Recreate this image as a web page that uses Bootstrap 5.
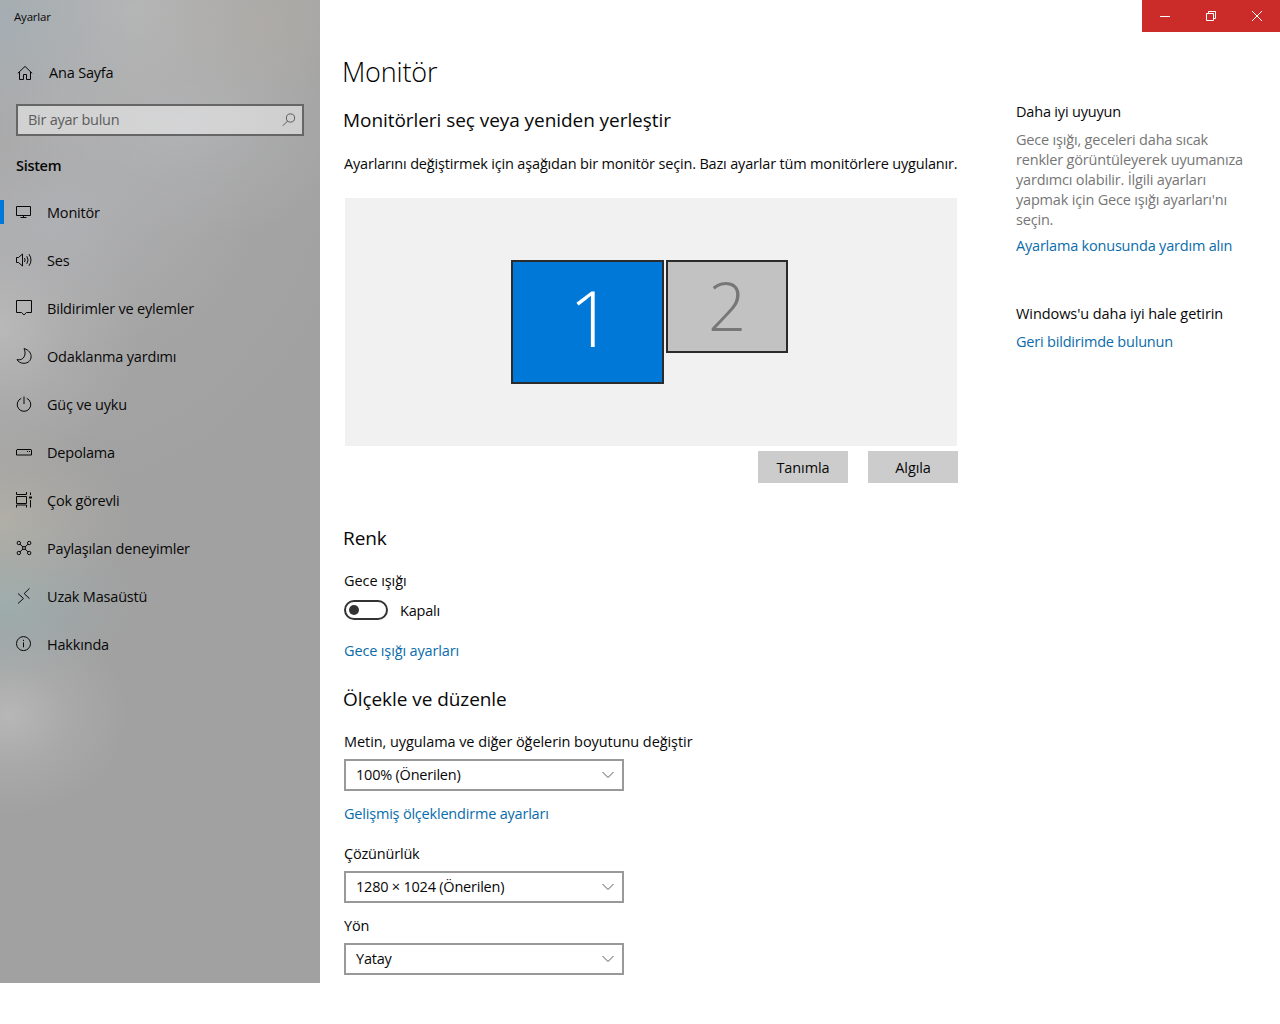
<!DOCTYPE html>
<html lang="tr">
<head>
<meta charset="utf-8">
<meta name="viewport" content="width=device-width, initial-scale=1">
<title>Ayarlar</title>
<link href="https://cdn.jsdelivr.net/npm/bootstrap@5.3.0/dist/css/bootstrap.min.css" rel="stylesheet">
<style>
  body { font-family: "Open Sans", "Noto Sans", sans-serif; font-size: 14.5px; line-height: 20px; letter-spacing: -.19px; color: #080808; background: #fff; height: 1024px; overflow: hidden; white-space: nowrap; }
  .side-pane { width: 320px; height: 983px; color: #080808;
    background:
      radial-gradient(150px 120px at 0 20px, rgba(163,174,181,.75), rgba(163,174,181,.3) 50%, rgba(163,174,181,0)),
      radial-gradient(120px 90px at 275px 25px, rgba(176,172,164,.6), rgba(176,172,164,.2) 50%, rgba(176,172,164,0)),
      radial-gradient(230px 160px at 130px 10px, rgba(184,184,184,.85), rgba(184,184,184,.35) 50%, rgba(184,184,184,0)),
      radial-gradient(180px 110px at 185px 130px, rgba(180,181,184,.7), rgba(180,181,184,.3) 50%, rgba(180,181,184,0)),
      radial-gradient(190px 130px at 60px 220px, rgba(177,178,182,.8), rgba(177,178,182,.3) 50%, rgba(177,178,182,0)),
      radial-gradient(140px 150px at 0 325px, rgba(186,186,186,.95), rgba(186,186,186,.35) 50%, rgba(186,186,186,0)),
      radial-gradient(130px 95px at 0 520px, rgba(178,176,168,.9), rgba(178,176,168,.4) 50%, rgba(178,176,168,0)),
      radial-gradient(130px 90px at 0 600px, rgba(156,174,175,.9), rgba(156,174,175,.4) 50%, rgba(156,174,175,0)),
      radial-gradient(120px 100px at 8px 715px, rgba(184,184,184,.95), rgba(184,184,184,.35) 50%, rgba(184,184,184,0)),
      radial-gradient(320px 420px at 60px 80px, rgba(176,176,176,.6), rgba(176,176,176,0)),
      #a1a1a1; }
  .pane-title { height: 32px; padding: 2px 0 0 14px; font-size: 11.5px; }
  .home-row { height: 48px; margin-top: 16px; padding: 2px 0 0 17px; }
  .search-box { height: 32px; margin: 8px 16px 0; padding: 0 6px 0 10px; border: 2px solid #666; background: rgba(255,255,255,.45); color: #5c5c5c; letter-spacing: -.26px; }
  .group-name { height: 52px; padding: 20px 0 0 16px; font-weight: 600; letter-spacing: -.3px; }
  .side-link { height: 48px; padding: 2px 0 0 16px; color: inherit; text-decoration: none; position: relative; }
  .side-link svg { width: 16px; height: 16px; margin: -2px 15px 0 0; flex: none; }
  .side-link.current::before { content: ""; position: absolute; left: 0; top: 12px; width: 4px; height: 24px; background: #0078d7; }
  svg { display: block; overflow: visible; fill: none; stroke: currentColor; }
  .main-col { width: 614px; margin-left: 24px; padding-top: 54px; }
  .page-name { font-size: 27px; font-weight: 300; line-height: 36px; margin: 0 0 16px -2px; color: #000; }
  .sec-name { font-size: 19px; font-weight: 400; line-height: 28px; margin: 0 0 19px -1px; letter-spacing: -.06px; }
  .intro { margin-top: 20px; letter-spacing: -.17px; }
  .screens { height: 248px; margin: 24px 1px 5px; background: #f1f1f1; padding: 62px 0 0 166px; }
  .screen { border: 2px solid #2b2b2b; font-weight: 300; line-height: 1; letter-spacing: 0; }
  .screen-a { width: 153px; height: 124px; background: #0078d7; color: #fff; font-size: 77px; margin-right: 2px; padding: 0 0 9px 7px; }
  .screen-b { width: 122px; height: 93px; background: #c2c2c2; color: #777; font-size: 67px; padding-bottom: 2px; }
  .screen-actions { gap: 20px; margin-bottom: 41px; }
  .flat-btn { width: 90px; height: 32px; background: #ccc; border: 0; border-radius: 0; color: #080808; font-size: 14.5px; padding: 1px 0 0; line-height: 31px; letter-spacing: -.1px; }
  .switch-row { margin: 9px 0 21px; height: 20px; }
  .switch-row span { padding-top: 2px; }
  .pill { width: 44px; height: 20px; border: 2px solid #333; border-radius: 10px; padding: 3px; margin-right: 12px; }
  .pill i { display: block; width: 10px; height: 10px; border-radius: 50%; background: #333; }
  .win-link { color: #0a6cab; text-decoration: none; display: block; height: 20px; letter-spacing: -.2px; }
  .after-night { margin-bottom: 24px; letter-spacing: -.14px; }
  .pick { width: 280px; height: 32px; border: 2px solid #999; padding: 0 8px 0 10px; margin: 7px 0 13px; letter-spacing: -.22px; }
  .pick svg { color: #555; }
  .gap-below { margin-bottom: 20px; }
  .roomy { letter-spacing: -.07px; }
  .help-col { width: 240px; margin-left: 58px; padding-top: 102px; }
  .hint { color: #767676; margin: 8px 0 6px; letter-spacing: -.19px; }
  .help-next { margin: 48px 0 8px; }
  .caption-bar { position: absolute; top: 0; right: 0; width: 138px; height: 32px; background: #cc2c29; color: #fff; }
  .caption-bar span { width: 46px; height: 32px; }
</style>
</head>
<body>
<div class="d-flex align-items-start">
  <aside class="side-pane flex-shrink-0">
    <div class="pane-title d-flex align-items-center">Ayarlar</div>
    <div class="home-row d-flex align-items-center">
      <svg width="16" height="16" viewBox="0 0 16 16"><path d="M.8 8.300 8 1.400l7.200 6.900M2.500 7v7.500h4v-5h3v5h4V7"/></svg>
      <span class="ms-3">Ana Sayfa</span>
    </div>
    <div class="search-box d-flex align-items-center justify-content-between">
      <span>Bir ayar bulun</span>
      <svg width="14" height="14" viewBox="0 0 14 14"><circle cx="8.500" cy="5" r="4.100"/><path d="M5.600 8 .8 12.800"/></svg>
    </div>
    <div class="group-name">Sistem</div>
    <nav>
      <a class="side-link current d-flex align-items-center" href="#"><svg viewBox="0 0 16 16"><path d="M.5 2.500h14v9H.5zM7.500 11.500v2M4.500 13.500h6"/></svg>Monitör</a>
      <a class="side-link d-flex align-items-center" href="#"><svg viewBox="0 0 16 16"><path d="M.5 5.500h2l4-3.500v12l-4-3.500h-2zM8.500 6q1.300 2 0 4M10.800 4.200q2.600 3.800 0 7.600M13 2.200q4 5.800 0 11.600"/></svg>Ses</a>
      <a class="side-link d-flex align-items-center" href="#"><svg viewBox="0 0 16 16"><path d="M.5.500h15v12h-5l-2.500 2.400-2.500-2.400h-5z"/></svg>Bildirimler ve eylemler</a>
      <a class="side-link d-flex align-items-center" href="#"><svg viewBox="0 0 16 16"><path d="M8 .6c10 2.500 9 14.500 0 14.700-3.500 0-5.800-1.500-7-3.700C7.500 13.300 11 6.300 8 .6z"/></svg>Odaklanma yardımı</a>
      <a class="side-link d-flex align-items-center" href="#"><svg viewBox="0 0 16 16"><path d="M5.300 2.300a6.800 6.800 0 1 0 5.400 0M8 .5v7.500"/></svg>Güç ve uyku</a>
      <a class="side-link d-flex align-items-center" href="#"><svg viewBox="0 0 16 16"><path d="M1 5.500h14l.5.500v5h-15V6zM11 7.500h1M13 7.500h1"/></svg>Depolama</a>
      <a class="side-link d-flex align-items-center" href="#"><svg viewBox="0 0 16 16"><path d="M.5 0v2.500h10V0M.5 15.500v-2.500h10v2.500M.5 4.500h10v7H.5zM14.500.500v2.500M14.500 8v7.500"/><path d="M13 4.500h3v2h-3z" fill="currentColor" stroke="none"/></svg>Çok görevli</a>
      <a class="side-link d-flex align-items-center" href="#"><svg viewBox="0 0 16 16"><circle cx="2.800" cy="3" r="1.700"/><circle cx="13.200" cy="3" r="1.700"/><circle cx="2.800" cy="13" r="1.700"/><circle cx="13.200" cy="13" r="1.700"/><circle cx="8" cy="8" r="1.500"/><path d="m4 4.200 3 2.800M12 4.200 9 7M4 11.800 7 9M12 11.800 9 9"/></svg>Paylaşılan deneyimler</a>
      <a class="side-link d-flex align-items-center" href="#"><svg viewBox="0 0 16 16"><path d="m2 5.500 5.500 5L2 15.500M13.500.300 8.200 5.600l5.300 5"/></svg>Uzak Masaüstü</a>
      <a class="side-link d-flex align-items-center" href="#"><svg viewBox="0 0 16 16"><circle cx="7.500" cy="7.600" r="7"/><path d="M7.500 6.300v5M7.500 3.800v1.200"/></svg>Hakkında</a>
    </nav>
  </aside>

  <main class="main-col flex-shrink-0">
    <h1 class="page-name">Monitör</h1>
    <h2 class="sec-name">Monitörleri seç veya yeniden yerleştir</h2>
    <div class="intro">Ayarlarını değiştirmek için aşağıdan bir monitör seçin. Bazı ayarlar tüm monitörlere uygulanır.</div>
    <div class="screens d-flex align-items-start">
      <div class="screen screen-a d-flex justify-content-center align-items-center">1</div>
      <div class="screen screen-b d-flex justify-content-center align-items-center">2</div>
    </div>
    <div class="screen-actions d-flex justify-content-end">
      <button class="btn flat-btn">Tanımla</button>
      <button class="btn flat-btn">Algıla</button>
    </div>
    <h2 class="sec-name">Renk</h2>
    <div class="roomy">Gece ışığı</div>
    <div class="switch-row d-flex align-items-center"><div class="pill"><i></i></div><span>Kapalı</span></div>
    <a class="win-link after-night" href="#">Gece ışığı ayarları</a>
    <h2 class="sec-name">Ölçekle ve düzenle</h2>
    <div class="roomy">Metin, uygulama ve diğer öğelerin boyutunu değiştir</div>
    <div class="pick d-flex align-items-center justify-content-between">100% (Önerilen)<svg width="12" height="8" viewBox="0 0 12 8"><path d="m.5 1 5.500 5.500L11.500 1"/></svg></div>
    <a class="win-link gap-below" href="#">Gelişmiş ölçeklendirme ayarları</a>
    <div>Çözünürlük</div>
    <div class="pick d-flex align-items-center justify-content-between">1280 × 1024 (Önerilen)<svg width="12" height="8" viewBox="0 0 12 8"><path d="m.5 1 5.500 5.500L11.500 1"/></svg></div>
    <div>Yön</div>
    <div class="pick d-flex align-items-center justify-content-between">Yatay<svg width="12" height="8" viewBox="0 0 12 8"><path d="m.5 1 5.500 5.500L11.500 1"/></svg></div>
  </main>

  <section class="help-col flex-shrink-0">
    <div>Daha iyi uyuyun</div>
    <div class="hint">Gece ışığı, geceleri daha sıcak<br>renkler görüntüleyerek uyumanıza<br>yardımcı olabilir. İlgili ayarları<br>yapmak için Gece ışığı ayarları'nı<br>seçin.</div>
    <a class="win-link" href="#">Ayarlama konusunda yardım alın</a>
    <div class="help-next roomy">Windows'u daha iyi hale getirin</div>
    <a class="win-link" href="#">Geri bildirimde bulunun</a>
  </section>
</div>
<div class="caption-bar d-flex">
  <span class="d-flex align-items-center justify-content-center"><svg width="10" height="10" viewBox="0 0 10 10"><path d="M0 5.500h10"/></svg></span>
  <span class="d-flex align-items-center justify-content-center"><svg width="10" height="10" viewBox="0 0 10 10"><path d="M.5 2.500h7v7h-7zM2.500 2.500v-2h7v7h-2"/></svg></span>
  <span class="d-flex align-items-center justify-content-center"><svg width="10" height="10" viewBox="0 0 10 10"><path d="m0 0 10 10M10 0 0 10"/></svg></span>
</div>
<script src="https://cdn.jsdelivr.net/npm/bootstrap@5.3.0/dist/js/bootstrap.bundle.min.js"></script>
</body>
</html>
